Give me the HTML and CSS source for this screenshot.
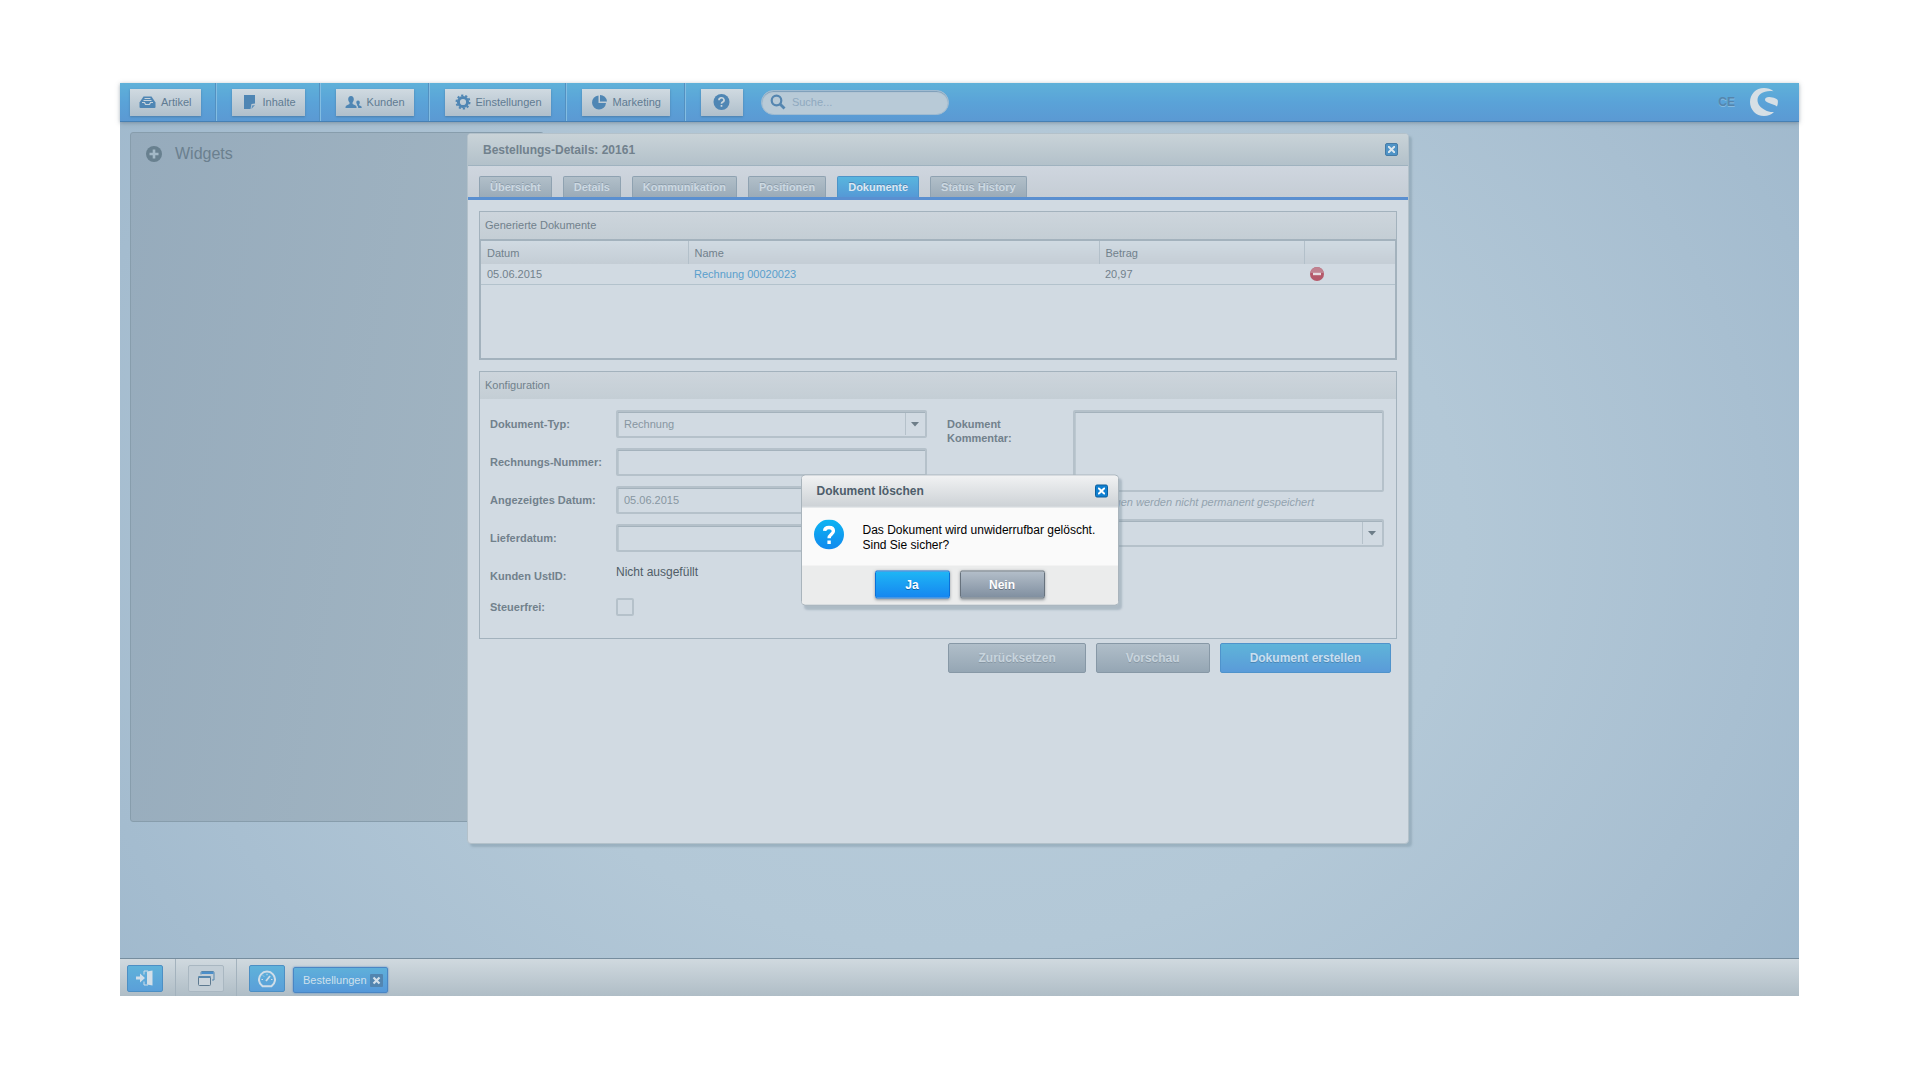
FILE: index.html
```html
<!DOCTYPE html>
<html lang="de">
<head>
<meta charset="utf-8">
<title>Bestellungs-Details</title>
<link rel="stylesheet" href="styles.css">
</head>
<body>
<div class="desktop">
  <header class="topbar">
    <nav class="menu">
      <div class="menu-item"><button class="menu-btn" type="button">
        <svg class="icon" viewBox="0 0 17 16"><path d="M4.500 2.500h8l4 6v4.500a1 1 0 0 1-1 1h-14a1 1 0 0 1-1-1V8.500z" fill="#4f86b4"/><path d="M5.500 4.500h6M4.500 6.500h8M3 8.500h2.500l1 2h4l1-2H14" stroke="#c6d3dc" stroke-width="1.200" fill="none"/></svg>Artikel</button></div>
      <div class="menu-item"><button class="menu-btn" type="button">
        <svg class="icon" viewBox="0 0 17 16"><path d="M3 1h11v8.500l-3.500.5-1 5H3z" fill="#4f86b4"/><path d="M14 11l-3 .500-.5 3.500z" fill="#5f91bc"/></svg>Inhalte</button></div>
      <div class="menu-item"><button class="menu-btn" type="button">
        <svg class="icon" viewBox="0 0 17 16"><path d="M6 2c1.900 0 2.800 1.300 2.800 3.200 0 1.400-.5 2.500-1.200 3.200v1.700l3 1.400c.8.500 1 1.100 1 2.500H.500c0-1.400.2-2 1-2.500l3-1.400V8.400C3.700 7.700 3.200 6.600 3.200 5.200 3.200 3.300 4.100 2 6 2zM13 6.500c1.200 0 1.800.9 1.800 2.100 0 .9-.3 1.500-.7 1.900v.7l1.700.9c.7.400.9.900.9 1.900h-3.500c0-1.500-.3-2.200-1.200-2.700l.2-.8c-.5-.4-.9-1.100-.9-1.900 0-1.200.5-2.100 1.700-2.100z" fill="#4f86b4"/></svg>Kunden</button></div>
      <div class="menu-item"><button class="menu-btn" type="button">
        <svg class="icon" viewBox="0 0 17 16"><circle cx="9" cy="8" r="4.600" fill="none" stroke="#4f86b4" stroke-width="3"/><circle cx="9" cy="8" r="6.600" fill="none" stroke="#4f86b4" stroke-width="1.800" stroke-dasharray="2.200 1.947"/></svg>Einstellungen</button></div>
      <div class="menu-item"><button class="menu-btn" type="button">
        <svg class="icon" viewBox="0 0 17 16"><path d="M7.500 1.500V9H15a7 7 0 1 1-7.500-7.500z" fill="#4f86b4"/><path d="M9 1a7 7 0 0 1 7 6.500H9z" fill="#4f86b4"/></svg>Marketing</button></div>
      <div class="menu-item"><button class="menu-btn menu-btn-help" type="button" aria-label="Hilfe">
        <svg class="icon" viewBox="0 0 16 16"><circle cx="8" cy="8" r="8" fill="#4f86b4"/><path d="M5.500 6.200a2.500 2.300 0 1 1 3.700 1.900c-.8.400-1.200.8-1.200 1.700M8 11v1.800" stroke="#c9d5dd" stroke-width="1.700" fill="none"/></svg></button></div>
    </nav>
    <label class="search">
      <svg class="search-icon" viewBox="0 0 16 16"><circle cx="6.500" cy="6.500" r="4.800" fill="none" stroke="#5586b0" stroke-width="2.200"/><path d="M10 10l4.500 4.500" stroke="#5586b0" stroke-width="2.800"/></svg>
      <input class="search-input" type="search" placeholder="Suche..." aria-label="Suche">
    </label>
    <div class="brand"><span class="edition">CE</span>
      <svg class="logo" viewBox="0 0 28 28"><path d="M23.500 3.300C21 1 17.500 0 14 0 6 0 0 6.200 0 14s6 14 14 14c4 0 7.500-1.400 10-4-3 .4-6-.4-9-2C10.500 19.600 7.500 16.500 7.500 12c0-6 7-10 16-8.700z" fill="#d6dfe5"/><path d="M15 11.500c0-1.800 2-2.700 4.500-2.500 4 .3 8 1.800 8.300 3.500.3 2.200 0 4-.8 6-2.500-1.800-5.500-2.500-8-3.500-2.500-.9-4-1.800-4-3.500z" fill="#d6dfe5"/></svg>
    </div>
  </header>

  <main class="workspace">
    <section class="widgets">
      <svg class="widgets-icon" viewBox="0 0 16 16"><circle cx="8" cy="8" r="8" fill="#68808f"/><path d="M8 3.500v9M3.500 8h9" stroke="#a3b8c6" stroke-width="2.600"/></svg>
      <h2 class="widgets-title">Widgets</h2>
    </section>

    <section class="window">
      <header class="window-head">
        <h1 class="window-title">Bestellungs-Details: 20161</h1>
        <button class="close" type="button" aria-label="Schließen"><svg class="close-icon" viewBox="0 0 7 7"><path d="M0 0l7 7M7 0L0 7" stroke="#dbe6ee" stroke-width="2"/></svg></button>
      </header>
      <nav class="tabs">
        <button class="tab" type="button">Übersicht</button>
        <button class="tab" type="button">Details</button>
        <button class="tab" type="button">Kommunikation</button>
        <button class="tab" type="button">Positionen</button>
        <button class="tab tab-active" type="button">Dokumente</button>
        <button class="tab" type="button">Status History</button>
      </nav>
      <div class="window-body">
        <section class="panel">
          <h3 class="panel-title">Generierte Dokumente</h3>
          <div class="grid">
            <table class="docs">
              <colgroup><col class="col-date"><col class="col-name"><col class="col-amount"><col></colgroup>
              <thead><tr><th>Datum</th><th>Name</th><th>Betrag</th><th></th></tr></thead>
              <tbody><tr><td>05.06.2015</td><td><a class="doc-link" href="#">Rechnung 00020023</a></td><td>20,97</td>
                <td><button class="delete" type="button" aria-label="Löschen"><svg class="delete-icon" viewBox="0 0 14 14"><circle cx="7" cy="7" r="7" fill="#b5596a"/><path d="M.5 6a6.500 6 0 0 1 13 0z" fill="#c08290"/><path d="M3 7h8" stroke="#e6dde2" stroke-width="2.400"/></svg></button></td></tr></tbody>
            </table>
          </div>
        </section>

        <section class="panel">
          <h3 class="panel-title">Konfiguration</h3>
          <form class="config">
            <div class="config-col">
              <div class="field"><label class="label" for="typ">Dokument-Typ:</label>
                <span class="combo"><select class="control" id="typ"><option>Rechnung</option></select><svg class="arrow" viewBox="0 0 8 5"><path d="M0 0h8L4 4.500z" fill="#6d7d88"/></svg></span></div>
              <div class="field"><label class="label" for="nummer">Rechnungs-Nummer:</label><input class="control" id="nummer" type="text"></div>
              <div class="field"><label class="label" for="datum">Angezeigtes Datum:</label><input class="control" id="datum" type="text" value="05.06.2015"></div>
              <div class="field"><label class="label" for="liefer">Lieferdatum:</label><input class="control" id="liefer" type="text"></div>
              <div class="field"><span class="label">Kunden UstID:</span><span class="value">Nicht ausgefüllt</span></div>
              <div class="field field-check"><label class="label" for="steuerfrei">Steuerfrei:</label><input class="check" id="steuerfrei" type="checkbox"></div>
            </div>
            <div class="config-col">
              <div class="field field-area"><label class="label" for="kommentar">Dokument<br>Kommentar:</label>
                <div class="stack"><textarea class="control area" id="kommentar"></textarea><p class="hint">Änderungen werden nicht permanent gespeichert</p></div></div>
              <div class="field"><label class="label" for="auswahl"></label>
                <span class="combo"><select class="control" id="auswahl" aria-label="Auswahl"><option></option></select><svg class="arrow" viewBox="0 0 8 5"><path d="M0 0h8L4 4.500z" fill="#6d7d88"/></svg></span></div>
            </div>
          </form>
        </section>
        <div class="actions">
          <button class="btn btn-wide" type="button">Zurücksetzen</button>
          <button class="btn btn-wide" type="button">Vorschau</button>
          <button class="btn btn-wide btn-primary" type="button">Dokument erstellen</button>
        </div>
      </div>
    </section>
  </main>

  <footer class="taskbar">
    <div class="task-slot"><button class="task-icon" type="button" aria-label="Abmelden"><svg class="task-svg" viewBox="0 0 18 18"><path d="M0 6.500h4V3.500l5 4.500-5 4.500v-3H0z" fill="#cfdde8"/><path d="M8 4.500V1h4M8 11.500V15h4" fill="none" stroke="#cfdde8"/><path d="M11 1.500L16.500.500v15l-5.500-1z" fill="#d3dfe8"/></svg></button></div>
    <div class="task-slot"><button class="task-icon task-icon-flat" type="button" aria-label="Fenster"><svg class="task-svg" viewBox="0 0 18 18"><path d="M4 4.500V2.500a1 1 0 0 1 1-1h11a1 1 0 0 1 1 1V10h-2" fill="none" stroke="#5787ad"/><path d="M4.500 3h12" stroke="#4c8fca" stroke-width="2"/><rect x="1.500" y="6.500" width="12" height="9" rx="1" fill="#cbd4db" stroke="#5e7a90"/><path d="M1.500 7h12" stroke="#5787ad" stroke-width="2"/></svg></button></div>
    <div class="task-slot"><button class="task-icon" type="button" aria-label="Dashboard"><svg class="task-svg" viewBox="0 0 18 18"><path d="M4.500 16.200a8 8 0 1 1 9 0z" fill="none" stroke="#cfdde8" stroke-width="2"/><path d="M8 11l4-5" stroke="#cfdde8" stroke-width="1.800"/><path d="M3.500 9.500h1.500M5 5.500l1 1M9 3.800v1.400M13 9.500h1.500" stroke="#cfdde8"/></svg></button>
      <button class="task" type="button">Bestellungen<svg class="task-close" viewBox="0 0 13 13"><rect width="13" height="13" rx="1" fill="#5285b0"/><path d="M3.500 3.500l6 6M9.500 3.500l-6 6" stroke="#d3e0ea" stroke-width="2.200"/></svg></button></div>
  </footer>

  <div class="dialog" role="alertdialog" aria-labelledby="dialog-title">
    <header class="dialog-head">
      <h2 class="dialog-title" id="dialog-title">Dokument löschen</h2>
      <button class="close close-strong" type="button" aria-label="Schließen"><svg class="close-icon" viewBox="0 0 7 7"><path d="M0 0l7 7M7 0L0 7" stroke="#fff" stroke-width="2"/></svg></button>
    </header>
    <div class="dialog-body">
      <svg class="dialog-icon" viewBox="0 0 30 30"><defs><linearGradient id="q" x2="0" y2="1"><stop offset="0" stop-color="#0cb4f2"/><stop offset="1" stop-color="#1289ee"/></linearGradient></defs><circle cx="15" cy="15" r="15" fill="url(#q)"/><path d="M10.600 11.300c.2-2.200 1.800-3.300 4.400-3.300s4.400 1.300 4.400 3.500c0 3.400-4.300 3.300-4.300 7.300M15.100 21v3.400" fill="none" stroke="#fff" stroke-width="3.400"/></svg>
      <p class="dialog-text">Das Dokument wird unwiderrufbar gelöscht.<br>Sind Sie sicher?</p>
    </div>
    <footer class="dialog-foot">
      <button class="btn btn-yes" type="button">Ja</button>
      <button class="btn btn-no" type="button">Nein</button>
    </footer>
  </div>
</div>
</body>
</html>
```
FILE: styles.css
```css
* { box-sizing: border-box; }

body {
  margin: 0;
  min-height: 100vh;
  padding: 83px 121px 84px 120px;
  display: flex;
  background: #fff;
  font: 11px/14px "Liberation Sans", Arial, sans-serif;
  color: #71818c;
}

h1, h2, h3, p { margin: 0; }
h1, h2, h3 { font-weight: normal; }
button, input, select, textarea { font: inherit; color: inherit; margin: 0; }
button { padding: 0; border: 0; }

.desktop {
  position: relative;
  flex: 1;
  display: flex;
  flex-direction: column;
  background: radial-gradient(ellipse 60% 90% at 50% 50%, #b9cddb 0%, #b3c8d7 50%, #a8bfd1 80%, #a0b9cd 100%);
}

/* top bar */
.topbar {
  display: flex;
  align-items: center;
  height: 39px;
  padding-right: 21px;
  background: linear-gradient(#5fb1d9, #5aa3d8 50%, #5b99d3);
  border-bottom: 1px solid #4680b4;
  box-shadow: 0 1px 4px rgba(80, 100, 115, .5);
}
.menu { display: flex; align-self: stretch; }
.menu-item {
  display: flex;
  align-items: center;
  padding: 0 15px;
  border-right: 1px solid #83bde2;
  box-shadow: inset -1px 0 #5390c0;
}
.menu-item:first-child { padding-left: 10px; }
.menu-item:last-child { border: 0; box-shadow: none; padding-right: 18px; }
.menu-btn {
  display: flex;
  align-items: center;
  gap: 5px;
  height: 27px;
  padding: 0 9px;
  background: linear-gradient(#d0dae1, #afbfcb);
  box-shadow: 0 1px 2px #4b7fac;
  color: #5f7b92;
}
.icon { width: 17px; height: 16px; }
.menu-btn-help { width: 42px; padding: 0; justify-content: center; }
.search {
  display: flex;
  align-items: center;
  gap: 6px;
  width: 188px;
  height: 25px;
  padding: 0 12px 0 8px;
  border-radius: 13px;
  background: #b8cad7;
  border: 1px solid #9fbbd1;
  box-shadow: inset 0 1px 1px #7c9db8;
}
.search-icon { width: 16px; height: 16px; flex: none; }
.search-input {
  flex: 1;
  min-width: 0;
  padding: 0;
  border: 0;
  outline: 0;
  background: none;
}
.search-input::placeholder { color: #8fa9bf; opacity: 1; }
.brand { display: flex; align-items: center; gap: 15px; margin-left: auto; }
.edition { font-size: 12px; font-weight: bold; color: #5586ad; text-shadow: 0 1px #86bbdf; }
.logo { width: 28px; height: 28px; }

/* desktop area */
.workspace { position: relative; flex: 1; padding: 10px; }
.widgets {
  display: flex;
  align-items: center;
  align-content: flex-start;
  flex-wrap: wrap;
  gap: 13px;
  width: 414px;
  height: 690px;
  padding: 12px 15px;
  background: linear-gradient(100deg, #96abbc, #a3b6c3);
  border: 1px solid #879dac;
  border-radius: 3px;
}
.widgets-icon { width: 16px; height: 16px; }
.widgets-title { font-size: 16px; line-height: 18px; color: #6b808f; }

/* order window */
.window {
  position: absolute;
  left: 347px;
  top: 11px;
  width: 942px;
  height: 711px;
  background: #d1dae2;
  border: 1px solid #b3c1ca;
  border-radius: 4px;
  box-shadow: 3px 3px 2px rgba(110, 135, 150, .35);
}
.window-head, .dialog-head {
  display: flex;
  align-items: center;
  justify-content: space-between;
  height: 32px;
  padding: 0 10px 0 15px;
  border-bottom: 1px solid #9fb2bf;
  border-radius: 3px 3px 0 0;
  background: linear-gradient(#c9d3d8, #b3c1ca);
}
.window-title, .dialog-title { font-size: 12px; font-weight: bold; color: #71818d; }
.close {
  display: flex;
  align-items: center;
  justify-content: center;
  width: 13px;
  height: 13px;
  border-radius: 2px;
  background: #4f93c6;
  border: 1px solid #467ba6;
}
.close-strong { background: #0f7fd0; border-color: #0c5f9d; }
.close-icon { width: 7px; height: 7px; flex: none; }

.tabs {
  display: flex;
  align-items: flex-end;
  gap: 11px;
  height: 34px;
  padding: 0 11px;
  background: linear-gradient(#cfd6df, #c5cdd5);
  border-bottom: 3px solid #5a8fd0;
}
.tab {
  height: 21px;
  padding: 0 10px;
  border: 1px solid #8fa2b1;
  border-bottom: 0;
  border-radius: 2px 2px 0 0;
  background: linear-gradient(#b1bfc9, #9babb8);
  color: #cdd9e2;
  font-weight: bold;
  text-shadow: 0 -1px #8c9dab;
}
.tab-active {
  background: linear-gradient(#58b5de, #5599d6);
  border-color: #4d94c8;
  color: #dbe8f2;
  text-shadow: 0 -1px #4c86b5;
}

.window-body { padding: 11px; }
.panel { margin-bottom: 11px; border: 1px solid #a3b2bd; }
.panel-title {
  height: 27px;
  padding: 0 5px;
  line-height: 27px;
  font-size: 11px;
  background: linear-gradient(#cdd5dc, #c4ced5);
}
.grid { height: 121px; border: 2px solid #a3b2bd; margin: 0 -1px -1px; }
.docs { width: 100%; table-layout: fixed; border-collapse: collapse; }
.col-date { width: 207px; }
.col-name { width: 411px; }
.col-amount { width: 205px; }
.docs th, .docs td { padding: 0 6px; text-align: left; font-weight: normal; }
.docs th { height: 23px; background: linear-gradient(#d0dae2, #c4cdd5); border-left: 1px solid #b3c0ca; }
.docs th:first-child { border-left: 0; }
.docs td { height: 20px; border-bottom: 1px solid #b3c2cc; }
.doc-link { color: #5a9fcc; text-decoration: none; }
.delete { display: flex; background: none; }
.delete-icon { width: 14px; height: 14px; }

.config { display: grid; grid-template-columns: 1fr 1fr; padding: 11px 10px 22px; }
.config-col { display: flex; flex-direction: column; gap: 10px; }
.config-col + .config-col { padding-left: 9px; }
.field { display: grid; grid-template-columns: 126px 311px; align-items: center; min-height: 28px; }
.label { font-weight: bold; }
.value { font-size: 12px; line-height: 14px; padding-bottom: 8px; color: #505d67; }
.control {
  display: block;
  width: 100%;
  height: 28px;
  padding: 0 6px;
  border: 2px solid #b5c1ca;
  border-radius: 2px;
  outline: 0;
  background: #d1dae2;
  box-shadow: inset 0 1px #a4b2bc, inset 1px 0 #bcc8d0;
  color: #8796a1;
  appearance: none;
}
.combo { position: relative; display: block; }
.combo::after {
  content: "";
  position: absolute;
  top: 3px;
  right: 21px;
  height: 22px;
  border-left: 1px solid #b5c1ca;
}
.arrow { position: absolute; right: 8px; top: 12px; width: 8px; height: 5px; pointer-events: none; }
.area { height: 82px; padding: 4px 6px; resize: none; }
.field-area { align-items: start; min-height: 99px; }
.field-area .label { padding-top: 7px; }
.hint { padding-top: 3px; font-style: italic; color: #93a3af; }
.field-check { min-height: 18px; margin-top: -2px; }
.check {
  appearance: none;
  width: 18px;
  height: 18px;
  border: 2px solid #b5c1ca;
  border-radius: 2px;
}

.actions { display: flex; justify-content: flex-end; gap: 10px; margin-top: -7px; padding-right: 6px; }
.btn {
  height: 28px;
  border: 1px solid #67727d;
  border-radius: 2px;
  background: linear-gradient(#b3bec9, #808fa0);
  color: #fff;
  font-size: 12px;
  font-weight: bold;
  text-shadow: 0 1px #66727e;
  box-shadow: 0 1px 3px rgba(60, 70, 80, .5);
}
.btn-wide {
  height: 30px;
  padding: 0 29px;
  border-color: #8798a6;
  background: linear-gradient(#b0bec9, #95a6b4);
  color: #c8d4dd;
  text-shadow: 0 1px #8797a4;
  box-shadow: none;
}
.btn-primary {
  border-color: #4f93cb;
  background: linear-gradient(#5fb4d9, #5a9bd9);
  color: #c9dfef;
  text-shadow: 0 1px #4b87b6;
}

/* task bar */
.taskbar {
  display: flex;
  height: 38px;
  border-top: 1px solid #768d9e;
  background: linear-gradient(#d0d9df, #afbdc6);
}
.task-slot { display: flex; align-items: flex-start; gap: 8px; padding: 6px 12px; border-right: 1px solid #a3b2bd; }
.task-slot:first-child { padding-left: 7px; }
.task-slot:last-child { border: 0; }
.task-icon {
  display: flex;
  align-items: center;
  justify-content: center;
  width: 36px;
  height: 27px;
  border: 1px solid #4c8fc4;
  border-radius: 2px;
  background: linear-gradient(#5fb2da, #5a9fd9);
}
.task-icon-flat { background: #c3ced6; border-color: #a9b7c1; }
.task-svg { width: 18px; height: 18px; }
.task {
  display: flex;
  align-items: center;
  gap: 3px;
  height: 26px;
  margin-top: 2px;
  padding: 0 4px 0 9px;
  border: 1px solid #4a86c4;
  border-radius: 2px;
  background: linear-gradient(#5fb0da, #5598d9);
  box-shadow: 0 0 2px #4a86c4;
  color: #cfe0ec;
}
.task-close { width: 13px; height: 13px; }

/* confirmation dialog */
.dialog {
  position: absolute;
  left: 50%;
  top: 50%;
  width: 318px;
  transform: translate(-50%, -50%);
  border: 1px solid #a9b4bc;
  border-radius: 4px;
  background: #fafafa;
  box-shadow: 3px 4px 2px rgba(120, 140, 155, .4);
  overflow: hidden;
}
.dialog-head { background: linear-gradient(#f1f2f3, #cdd2d6); border-color: #a9b3bc; }
.dialog-title { color: #4d5d6b; }
.dialog-body { display: flex; gap: 19px; padding: 12px; height: 58px; }
.dialog-icon { width: 30px; height: 30px; flex: none; }
.dialog-text { padding-top: 3px; font-size: 12px; line-height: 15px; color: #000; white-space: nowrap; }
.dialog-foot { display: flex; justify-content: center; gap: 10px; padding: 5px 0 6px; background: #ebecec; }
.btn-yes {
  width: 75px;
  border-color: #0a70d8;
  background: linear-gradient(#1fb6f5, #1586f0);
  text-shadow: 0 1px #0c62ae;
}
.btn-no { width: 85px; }
```
